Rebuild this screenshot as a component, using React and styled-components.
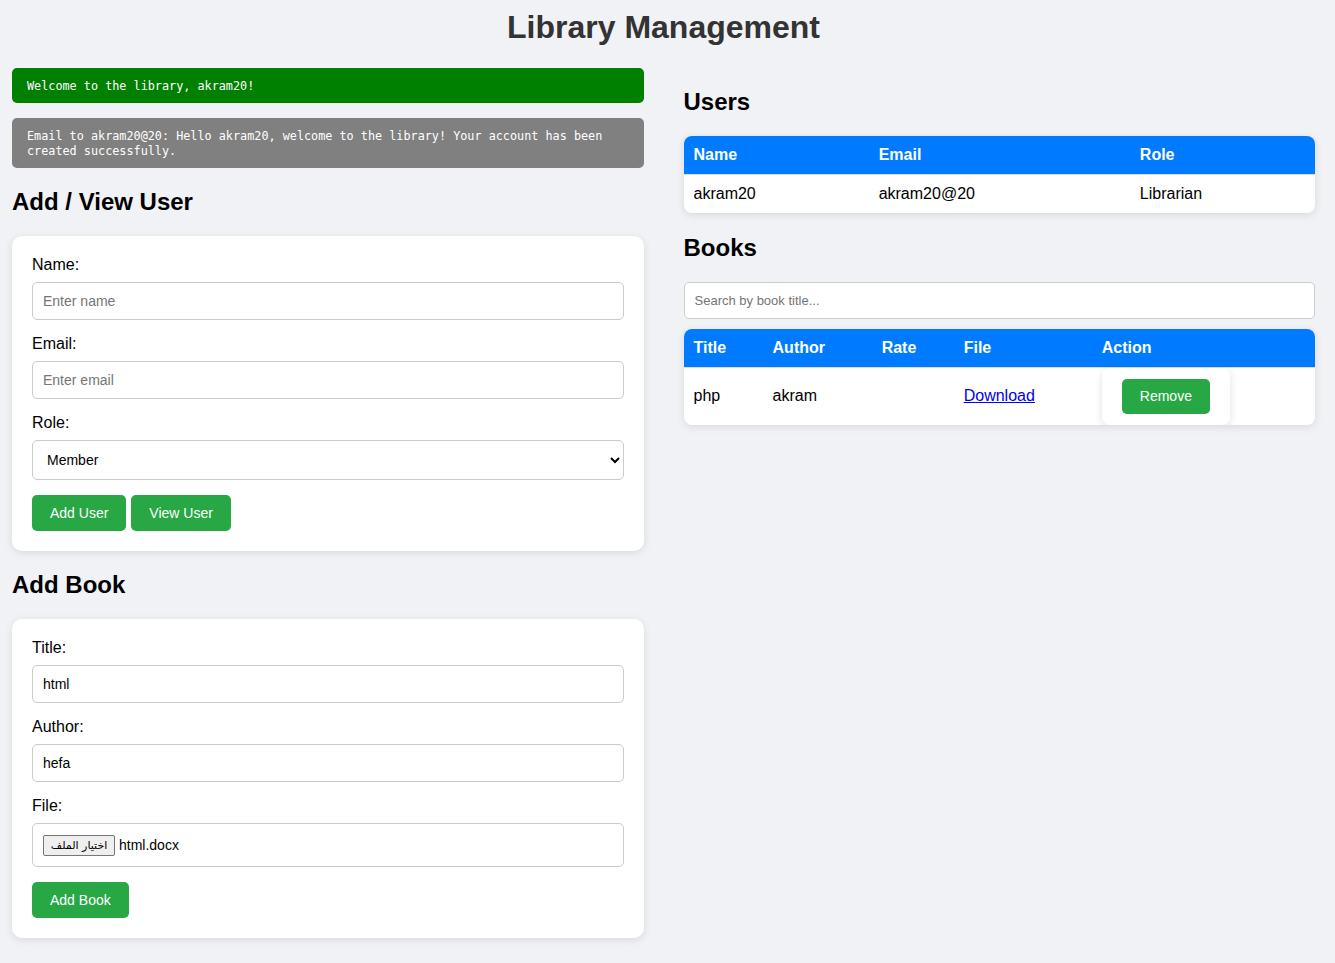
import React from 'react';
import styled, { createGlobalStyle } from 'styled-components';

const GlobalStyle = createGlobalStyle`
    body {
        margin: 0;
        background: #f0f2f5;
        font-family: "Liberation Sans", Arial, sans-serif;
        color: #000;
    }
    * {
        box-sizing: border-box;
    }
`;

const Page = styled.div`
    padding: 0 20px 20px 12px;
`;

const Title = styled.h1`
    margin: 9px 0 22px;
    font-size: 32px;
    line-height: 37px;
    text-align: center;
    color: #333;
`;

const Columns = styled.div`
    display: flex;
    gap: 40px;
    align-items: flex-start;
`;

const Column = styled.div`
    flex: 1;
    min-width: 0;
    display: flex;
    flex-direction: column;
`;

const Notice = styled.div`
    background: ${p => (p.$tone === 'success' ? '#008000' : '#808080')};
    color: #fff;
    font-family: "DejaVu Sans Mono", "Liberation Mono", monospace;
    font-size: 11.8px;
    line-height: 15px;
    padding: 11px 15px 9px;
    border-radius: 5px;
    margin-bottom: 15px;
`;

const SectionTitle = styled.h2`
    margin: ${p => p.$top}px 0 20px;
    font-size: 24px;
    line-height: 28px;
`;

const Card = styled.div`
    background: #fff;
    border-radius: 10px;
    padding: 20px;
    box-shadow: 0 2px 8px rgba(0, 0, 0, 0.1);
`;

const Label = styled.label`
    display: block;
    font-size: 16px;
    line-height: 18px;
    margin-bottom: 8px;
`;

const Input = styled.input`
    display: block;
    width: 100%;
    height: 38px;
    padding: 10px;
    margin-bottom: 15px;
    border: 1px solid #ccc;
    border-radius: 5px;
    font-family: "Liberation Sans", Arial, sans-serif;
    font-size: 14px;
    color: #000;
    background: #fff;
    &::placeholder {
        color: #757575;
    }
`;

const Select = styled.select`
    display: block;
    width: 100%;
    height: 40px;
    padding: 0 10px;
    margin-bottom: 15px;
    border: 1px solid #ccc;
    border-radius: 5px;
    font-family: "Liberation Sans", Arial, sans-serif;
    font-size: 14px;
    color: #000;
    background: #fff;
`;

const FileBox = styled.div`
    display: flex;
    align-items: center;
    gap: 4px;
    height: 44px;
    padding: 0 10px;
    margin-bottom: 15px;
    border: 1px solid #ccc;
    border-radius: 5px;
    font-size: 14px;
`;

const FileButton = styled.span`
    display: inline-flex;
    align-items: center;
    justify-content: center;
    width: 72px;
    height: 21px;
    background: #efefef;
    border: 1px solid #767676;
    border-radius: 2px;
    font-family: "DejaVu Sans", sans-serif;
    font-size: 11px;
    direction: rtl;
`;

const ButtonRow = styled.div`
    display: flex;
    gap: 5px;
`;

const Button = styled.button`
    height: ${p => (p.$small ? '35px' : '36px')};
    padding: 0 18px;
    border: none;
    border-radius: 5px;
    background: #28a745;
    color: #fff;
    font-family: "Liberation Sans", Arial, sans-serif;
    font-size: 14px;
    cursor: pointer;
`;

const Table = styled.table`
    width: 100%;
    table-layout: fixed;
    border-collapse: collapse;
    background: #fff;
    border-radius: 8px;
    overflow: hidden;
    box-shadow: 0 2px 8px rgba(0, 0, 0, 0.1);
    margin-bottom: 20px;
`;

const Th = styled.th`
    width: ${p => p.$w}px;
    height: 38px;
    padding: 0 10px;
    background: #007bff;
    color: #fff;
    text-align: left;
    font-size: 16px;
    font-weight: bold;
`;

const Td = styled.td`
    height: ${p => (p.$tall ? '57px' : '39px')};
    padding: 0 10px;
    border-top: 1px solid #ddd;
    font-size: 16px;
    vertical-align: middle;
`;

const ActionTd = styled.td`
    padding: 0 10px;
    border-top: 1px solid #ddd;
    vertical-align: top;
`;

const ActionBox = styled.div`
    display: inline-flex;
    padding: 11px 20px;
    background: #fff;
    border-radius: 8px;
    box-shadow: 0 2px 8px rgba(0, 0, 0, 0.12);
`;

const Search = styled(Input)`
    height: 37px;
    font-size: 13px;
    margin-bottom: 10px;
`;

const DownloadLink = styled.a`
    color: #0000ee;
    text-decoration: underline;
`;

const App = () => {
    return (
        <Page>
            <GlobalStyle />
            <Title>Library Management</Title>
            <Columns>
                <Column>
                    <Notice $tone="success">Welcome to the library, akram20!</Notice>
                    <Notice>
                        Email to akram20@20: Hello akram20, welcome to the library! Your account has been created successfully.
                    </Notice>
                    <SectionTitle $top={5}>Add / View User</SectionTitle>
                    <Card>
                        <Label>Name:</Label>
                        <Input placeholder="Enter name" />
                        <Label>Email:</Label>
                        <Input placeholder="Enter email" />
                        <Label>Role:</Label>
                        <Select defaultValue="Member">
                            <option>Member</option>
                            <option>Librarian</option>
                        </Select>
                        <ButtonRow>
                            <Button>Add User</Button>
                            <Button>View User</Button>
                        </ButtonRow>
                    </Card>
                    <SectionTitle $top={20}>Add Book</SectionTitle>
                    <Card>
                        <Label>Title:</Label>
                        <Input defaultValue="html" />
                        <Label>Author:</Label>
                        <Input defaultValue="hefa" />
                        <Label>File:</Label>
                        <FileBox>
                            <FileButton>اختيار الملف</FileButton>
                            <span>html.docx</span>
                        </FileBox>
                        <Button>Add Book</Button>
                    </Card>
                </Column>
                <Column>
                    <SectionTitle $top={20}>Users</SectionTitle>
                    <Table>
                        <thead>
                            <tr>
                                <Th $w={185}>Name</Th>
                                <Th $w={261}>Email</Th>
                                <Th $w={185}>Role</Th>
                            </tr>
                        </thead>
                        <tbody>
                            <tr>
                                <Td>akram20</Td>
                                <Td>akram20@20</Td>
                                <Td>Librarian</Td>
                            </tr>
                        </tbody>
                    </Table>
                    <SectionTitle $top={1}>Books</SectionTitle>
                    <Search placeholder="Search by book title..." />
                    <Table>
                        <thead>
                            <tr>
                                <Th $w={79}>Title</Th>
                                <Th $w={109}>Author</Th>
                                <Th $w={82}>Rate</Th>
                                <Th $w={138}>File</Th>
                                <Th $w={223}>Action</Th>
                            </tr>
                        </thead>
                        <tbody>
                            <tr>
                                <Td $tall>php</Td>
                                <Td $tall>akram</Td>
                                <Td $tall></Td>
                                <Td $tall>
                                    <DownloadLink href="#">Download</DownloadLink>
                                </Td>
                                <ActionTd>
                                    <ActionBox>
                                        <Button $small>Remove</Button>
                                    </ActionBox>
                                </ActionTd>
                            </tr>
                        </tbody>
                    </Table>
                </Column>
            </Columns>
        </Page>
    );
};

export default App;
